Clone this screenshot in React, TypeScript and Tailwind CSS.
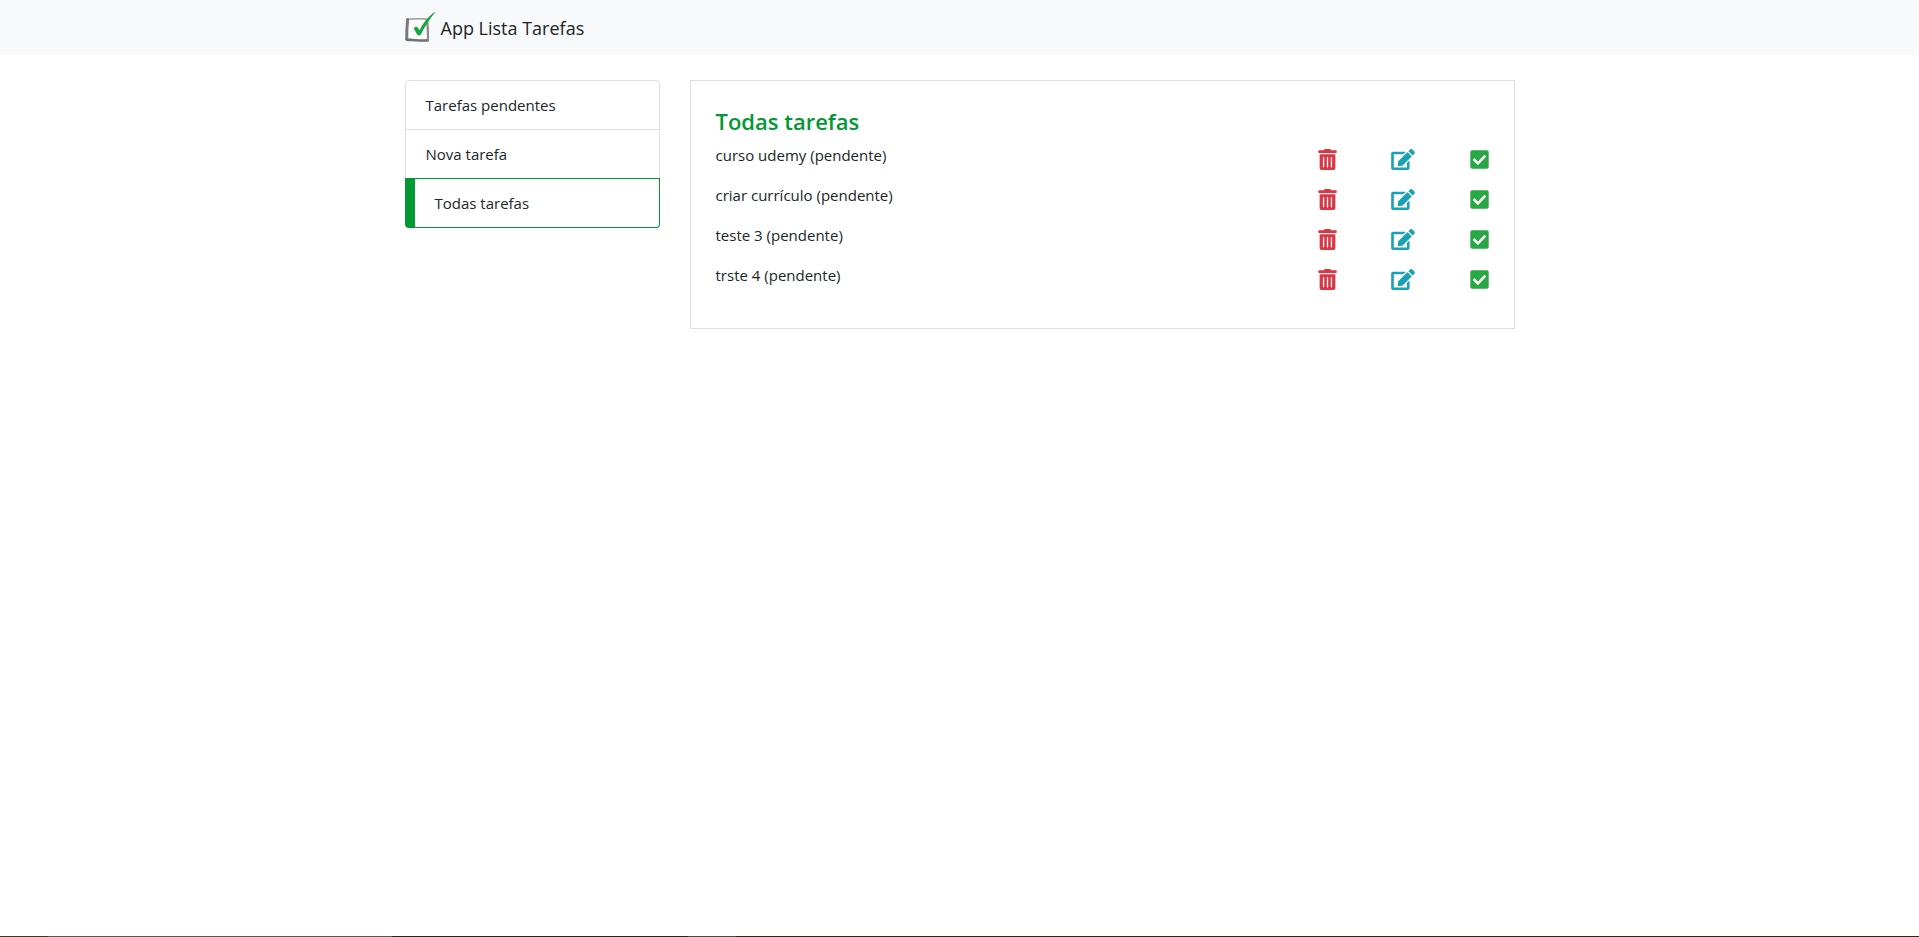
import { FaCheckSquare, FaEdit, FaTrashAlt } from 'react-icons/fa';

const menu = [
  { label: 'Tarefas pendentes', active: false },
  { label: 'Nova tarefa', active: false },
  { label: 'Todas tarefas', active: true },
];

const tasks = [
  { name: 'curso udemy', status: 'pendente' },
  { name: 'criar currículo', status: 'pendente' },
  { name: 'teste 3', status: 'pendente' },
  { name: 'trste 4', status: 'pendente' },
];

function Logo() {
  return (
    <svg viewBox="0 0 30 30" className="size-[30px]" aria-hidden="true">
      <path d="M2.5 7.6 L22 7.8 L23.2 28 L1.6 27.4 Z" fill="#fdfdfd" />
      <path d="M3.4 7.2 C9 6.4 15 6.6 21.4 7" fill="none" stroke="#9a9a9a" strokeWidth="1.6" strokeLinecap="round" />
      <path d="M2.6 7.6 C2 14 1.6 20 1.7 27.2" fill="none" stroke="#7a7a7a" strokeWidth="3" strokeLinecap="round" />
      <path d="M1.8 27.6 C9 28 16 28.8 22.8 28.4" fill="none" stroke="#707070" strokeWidth="2.6" strokeLinecap="round" />
      <path d="M22.4 10.6 C22.8 17 23.2 22 22.9 27.8" fill="none" stroke="#8a8a8a" strokeWidth="2.2" strokeLinecap="round" />
      <path d="M8.8 16.4 C10 14.4 12 14.2 12.8 15.6 L14.4 18.2 C18 10.8 23.2 4.6 29.6 0 L30 0.6 C25 6.6 20 14.4 16 22.2 C15 23.8 12.8 23.8 12 22.2 Z" fill="#16a53f" />
    </svg>
  );
}

export default function App() {
  return (
    <div className="flex min-h-screen flex-col bg-white font-['Segoe_UI','Open_Sans',sans-serif] text-[15px] leading-6 text-[#212529]">
      <nav className="bg-[#f8f9fa] pt-3 pb-[11px]">
        <div className="mx-auto w-full max-w-[1140px] px-[15px]">
          <a href="#" className="flex items-start gap-1.5 text-lg leading-8">
            <Logo />
            App Lista Tarefas
          </a>
        </div>
      </nav>

      <main className="mx-auto grid w-full max-w-[1140px] grow grid-cols-4 items-start gap-[30px] px-[15px] pt-[25px]">
        <ul>
          {menu.map((item) => (
            <li
              key={item.label}
              className={
                item.active
                  ? 'relative -mt-px rounded-b border border-l-10 border-[#009933] first:mt-0'
                  : '-mt-px border border-[#dfdfdf] first:mt-0 first:rounded-t last:rounded-b'
              }
            >
              <a href="#" className="block px-5 py-3">
                {item.label}
              </a>
            </li>
          ))}
        </ul>

        <section className="col-span-3 border border-[#dfdfdf] p-[25px]">
          <h4 className="mb-[7px] pt-px text-[22px] leading-[29px] font-semibold text-[#009933]">Todas tarefas</h4>
          <ul>
            {tasks.map((task) => (
              <li key={task.name} className="mb-4 flex h-6 items-start justify-between">
                <span>
                  {task.name} ({task.status})
                </span>
                <div className="flex w-[171px] items-center justify-between pt-1.5">
                  <button type="button" aria-label="Remover" className="text-[#dc3545]">
                    <FaTrashAlt className="h-[21px] w-[19px]" />
                  </button>
                  <button type="button" aria-label="Editar" className="text-[#17a2b8]">
                    <FaEdit className="h-[21px] w-6" />
                  </button>
                  <button type="button" aria-label="Concluir" className="text-[#28a745]">
                    <FaCheckSquare className="h-[21px] w-[19px]" />
                  </button>
                </div>
              </li>
            ))}
          </ul>
        </section>
      </main>

      <div className="flex h-px" aria-hidden="true">
        <div className="w-12 bg-[#3a382c]" />
        <div className="w-[344px] bg-[#5a5858]" />
        <div className="w-[296px] bg-[#222222]" />
        <div className="w-12 bg-[#4a4a4a]" />
        <div className="grow bg-[#2a2624]" />
      </div>
    </div>
  );
}
